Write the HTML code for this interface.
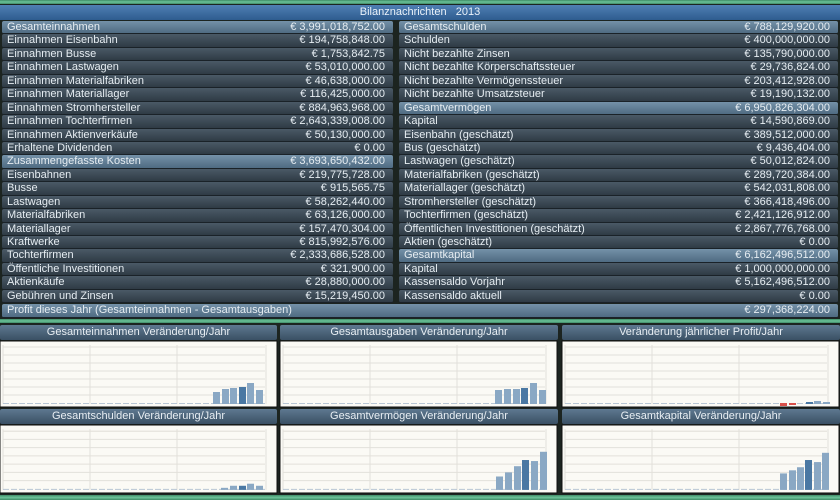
<!DOCTYPE html>
<html><head><meta charset="utf-8"><style>
*{margin:0;padding:0;box-sizing:border-box}
body{width:840px;height:500px;overflow:hidden;background:#1c2420;font-family:"Liberation Sans","DejaVu Sans",sans-serif;font-size:11px;color:#e6edf2;position:relative}
.green{position:absolute;left:0;width:840px;background:linear-gradient(#3f8a66,#6cc49a,#3f8a66)}
.title{position:absolute;left:0;top:5px;width:840px;height:15px;background:linear-gradient(#4f7fb3,#2e5c8f);text-align:center;line-height:15px;color:#eaf2fa}
.col{position:absolute;top:21px}
.r{height:13.45px;line-height:13px;margin-bottom:0;background:linear-gradient(#4a5966,#2f3b45);border-bottom:1px solid #1a2228;padding:0 8px 0 5px;display:flex;justify-content:space-between;white-space:nowrap;border-radius:2px}
.h{background:linear-gradient(#7491a8,#4f6b82)}
.ph{position:absolute;height:15px;line-height:15px;text-align:center;background:linear-gradient(#5e7890,#3a5064);color:#e8eef3;font-size:11px;border-radius:2px}
.pc{position:absolute;background:#fbfaf5;border:1px solid #111}
</style></head><body>
<div class="green" style="top:0;height:4px"></div>
<div class="title">Bilanznachrichten &nbsp; 2013</div>
<div class="col" style="left:2px;width:391px">
<div class="r h"><span>Gesamteinnahmen</span><span>€ 3,991,018,752.00</span></div>
<div class="r"><span>Einnahmen Eisenbahn</span><span>€ 194,758,848.00</span></div>
<div class="r"><span>Einnahmen Busse</span><span>€ 1,753,842.75</span></div>
<div class="r"><span>Einnahmen Lastwagen</span><span>€ 53,010,000.00</span></div>
<div class="r"><span>Einnahmen Materialfabriken</span><span>€ 46,638,000.00</span></div>
<div class="r"><span>Einnahmen Materiallager</span><span>€ 116,425,000.00</span></div>
<div class="r"><span>Einnahmen Stromhersteller</span><span>€ 884,963,968.00</span></div>
<div class="r"><span>Einnahmen Tochterfirmen</span><span>€ 2,643,339,008.00</span></div>
<div class="r"><span>Einnahmen Aktienverkäufe</span><span>€ 50,130,000.00</span></div>
<div class="r"><span>Erhaltene Dividenden</span><span>€ 0.00</span></div>
<div class="r h"><span>Zusammengefasste Kosten</span><span>€ 3,693,650,432.00</span></div>
<div class="r"><span>Eisenbahnen</span><span>€ 219,775,728.00</span></div>
<div class="r"><span>Busse</span><span>€ 915,565.75</span></div>
<div class="r"><span>Lastwagen</span><span>€ 58,262,440.00</span></div>
<div class="r"><span>Materialfabriken</span><span>€ 63,126,000.00</span></div>
<div class="r"><span>Materiallager</span><span>€ 157,470,304.00</span></div>
<div class="r"><span>Kraftwerke</span><span>€ 815,992,576.00</span></div>
<div class="r"><span>Tochterfirmen</span><span>€ 2,333,686,528.00</span></div>
<div class="r"><span>Öffentliche Investitionen</span><span>€ 321,900.00</span></div>
<div class="r"><span>Aktienkäufe</span><span>€ 28,880,000.00</span></div>
<div class="r"><span>Gebühren und Zinsen</span><span>€ 15,219,450.00</span></div>
</div>
<div class="col" style="left:399px;width:439px">
<div class="r h"><span>Gesamtschulden</span><span>€ 788,129,920.00</span></div>
<div class="r"><span>Schulden</span><span>€ 400,000,000.00</span></div>
<div class="r"><span>Nicht bezahlte Zinsen</span><span>€ 135,790,000.00</span></div>
<div class="r"><span>Nicht bezahlte Körperschaftssteuer</span><span>€ 29,736,824.00</span></div>
<div class="r"><span>Nicht bezahlte Vermögenssteuer</span><span>€ 203,412,928.00</span></div>
<div class="r"><span>Nicht bezahlte Umsatzsteuer</span><span>€ 19,190,132.00</span></div>
<div class="r h"><span>Gesamtvermögen</span><span>€ 6,950,826,304.00</span></div>
<div class="r"><span>Kapital</span><span>€ 14,590,869.00</span></div>
<div class="r"><span>Eisenbahn (geschätzt)</span><span>€ 389,512,000.00</span></div>
<div class="r"><span>Bus (geschätzt)</span><span>€ 9,436,404.00</span></div>
<div class="r"><span>Lastwagen (geschätzt)</span><span>€ 50,012,824.00</span></div>
<div class="r"><span>Materialfabriken (geschätzt)</span><span>€ 289,720,384.00</span></div>
<div class="r"><span>Materiallager (geschätzt)</span><span>€ 542,031,808.00</span></div>
<div class="r"><span>Stromhersteller (geschätzt)</span><span>€ 366,418,496.00</span></div>
<div class="r"><span>Tochterfirmen (geschätzt)</span><span>€ 2,421,126,912.00</span></div>
<div class="r"><span>Öffentlichen Investitionen (geschätzt)</span><span>€ 2,867,776,768.00</span></div>
<div class="r"><span>Aktien (geschätzt)</span><span>€ 0.00</span></div>
<div class="r h"><span>Gesamtkapital</span><span>€ 6,162,496,512.00</span></div>
<div class="r"><span>Kapital</span><span>€ 1,000,000,000.00</span></div>
<div class="r"><span>Kassensaldo Vorjahr</span><span>€ 5,162,496,512.00</span></div>
<div class="r"><span>Kassensaldo aktuell</span><span>€ 0.00</span></div>
</div>
<div class="r h" style="position:absolute;left:2px;top:304px;width:836px;height:14px"><span>Profit dieses Jahr (Gesamteinnahmen - Gesamtausgaben)</span><span>€ 297,368,224.00</span></div>
<div class="green" style="top:319px;height:4px"></div>
<div class="green" style="top:495px;height:5px"></div>

<div class="ph" style="left:0;top:325px;width:277px">Gesamteinnahmen Veränderung/Jahr</div>
<div class="ph" style="left:280px;top:325px;width:278px">Gesamtausgaben Veränderung/Jahr</div>
<div class="ph" style="left:562px;top:325px;width:278px">Veränderung jährlicher Profit/Jahr</div>
<div class="ph" style="left:0;top:409px;width:277px">Gesamtschulden Veränderung/Jahr</div>
<div class="ph" style="left:280px;top:409px;width:278px">Gesamtvermögen Veränderung/Jahr</div>
<div class="ph" style="left:562px;top:409px;width:278px">Gesamtkapital Veränderung/Jahr</div>

<svg width="840" height="500" style="position:absolute;left:0;top:0">
<defs>
<g id="grid">
<rect x="0" y="0" width="277" height="66" fill="#fbfaf5" stroke="#111" stroke-width="1"/>
<g stroke="#e2e0da" stroke-width="1">
<line x1="3" y1="6" x2="265" y2="6"/><line x1="3" y1="14" x2="265" y2="14"/><line x1="3" y1="22" x2="265" y2="22"/><line x1="3" y1="30" x2="265" y2="30"/><line x1="3" y1="38" x2="265" y2="38"/><line x1="3" y1="46" x2="265" y2="46"/><line x1="3" y1="54" x2="265" y2="54"/>
<line x1="3" y1="4" x2="3" y2="63"/><line x1="90" y1="4" x2="90" y2="63"/><line x1="177" y1="4" x2="177" y2="63"/><line x1="266" y1="4" x2="266" y2="63"/>
</g>
<line x1="3" y1="62.5" x2="265" y2="62.5" stroke="#b8c6d4" stroke-dasharray="6 2"/>
</g>
</defs>
<g transform="translate(0,341)"><use href="#grid"/>
<g fill="#8aa8c4"><rect x="213" y="51" width="7" height="12"/><rect x="222" y="48" width="7" height="15"/><rect x="230" y="47" width="7" height="16"/><rect x="247" y="42" width="7" height="21"/><rect x="256" y="49" width="7" height="14"/></g><rect x="239" y="46" width="7" height="17" fill="#4a78a3"/></g>
<g transform="translate(280,341)"><use href="#grid"/>
<g fill="#8aa8c4"><rect x="215" y="49" width="7" height="14"/><rect x="224" y="48" width="7" height="15"/><rect x="233" y="48" width="7" height="15"/><rect x="250" y="42" width="7" height="21"/><rect x="259" y="49" width="7" height="14"/></g><rect x="241" y="47" width="7" height="16" fill="#4a78a3"/></g>
<g transform="translate(562,341)"><use href="#grid"/>
<rect x="218" y="62" width="7" height="3" fill="#d9504a"/><rect x="227" y="62" width="7" height="2" fill="#d9504a"/>
<rect x="244" y="61" width="7" height="2" fill="#4a78a3"/><rect x="252" y="60" width="7" height="3" fill="#8aa8c4"/><rect x="261" y="61" width="7" height="2" fill="#8aa8c4"/></g>
<g transform="translate(0,425) scale(1,1.03)"><use href="#grid"/>
<g fill="#8aa8c4"><rect x="221" y="61" width="7" height="2"/><rect x="230" y="59" width="7" height="4"/><rect x="247" y="57" width="7" height="6"/><rect x="256" y="59" width="7" height="4"/></g><rect x="239" y="59" width="7" height="4" fill="#4a78a3"/></g>
<g transform="translate(280,425) scale(1,1.03)"><use href="#grid"/>
<g fill="#8aa8c4"><rect x="216" y="50" width="7" height="13"/><rect x="225" y="46" width="7" height="17"/><rect x="234" y="40" width="7" height="23"/><rect x="251" y="35" width="7" height="28"/><rect x="260" y="26" width="7" height="37"/></g><rect x="242" y="34" width="7" height="29" fill="#4a78a3"/></g>
<g transform="translate(562,425) scale(1,1.03)"><use href="#grid"/>
<g fill="#8aa8c4"><rect x="218" y="47" width="7" height="16"/><rect x="227" y="44" width="7" height="19"/><rect x="235" y="41" width="7" height="22"/><rect x="252" y="36" width="7" height="27"/><rect x="260" y="27" width="7" height="36"/></g><rect x="243" y="34" width="7" height="29" fill="#4a78a3"/></g>
</svg>
</body></html>
